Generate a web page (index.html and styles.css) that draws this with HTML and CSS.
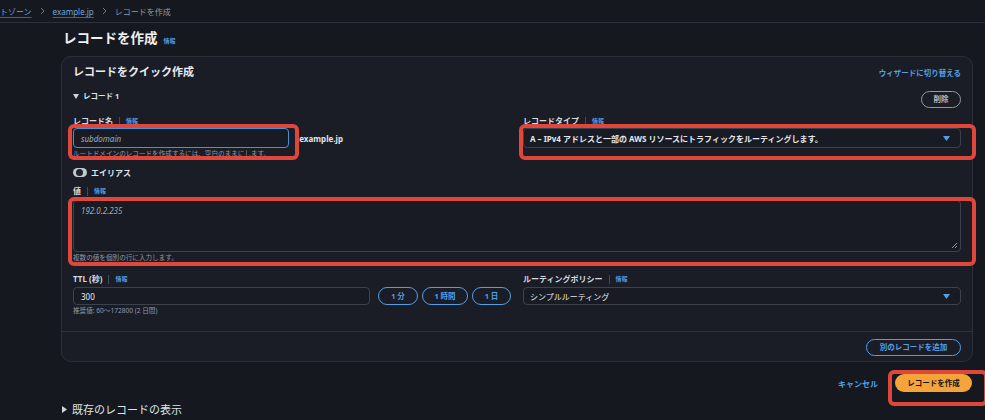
FILE: index.html
```html
<!DOCTYPE html>
<html lang="ja">
<head>
<meta charset="utf-8">
<title>レコードを作成</title>
<link rel="stylesheet" href="styles.css">
</head>
<body>
<nav class="crumbs">
  <a class="crumb-link">トゾーン</a>
  <svg class="chev" width="5" height="8" viewBox="0 0 5 8"><path d="M1 1l3 3-3 3" fill="none" stroke="#6b7685" stroke-width="1"/></svg>
  <a class="crumb-link">example.jp</a>
  <svg class="chev" width="5" height="8" viewBox="0 0 5 8"><path d="M1 1l3 3-3 3" fill="none" stroke="#6b7685" stroke-width="1"/></svg>
  <span class="crumb-current">レコードを作成</span>
</nav>

<main class="page">
  <header class="title-row">
    <h1 class="title">レコードを作成</h1>
    <a class="info info-title">情報</a>
  </header>

  <section class="card">
    <div class="card-head">
      <h2 class="card-title">レコードをクイック作成</h2>
      <a class="link">ウィザードに切り替える</a>
    </div>

    <div class="rec-head">
      <span class="rec-title"><svg class="tri-down" width="6" height="5" viewBox="0 0 6 5"><path d="M0 0h6L3 5z" fill="#d1d5db"/></svg>レコード 1</span>
      <button class="btn btn-gray">削除</button>
    </div>

    <div class="grid grid-top">
      <div class="field">
        <div class="label">レコード名<span class="sep"></span><a class="info">情報</a></div>
        <div class="name-row">
          <div class="input input-focus"><span class="ph">subdomain</span></div>
          <span class="suffix">.example.jp</span>
        </div>
        <div class="helper">ルートドメインのレコードを作成するには、空白のままにします。</div>
      </div>
      <div class="field">
        <div class="label">レコードタイプ<span class="sep"></span><a class="info">情報</a></div>
        <div class="select">
          <span class="select-text strong">A – IPv4 アドレスと一部の AWS リソースにトラフィックをルーティングします。</span>
          <svg class="caret" width="7" height="5" viewBox="0 0 7 5"><path d="M0 0h7L3.5 5z" fill="#539fe5"/></svg>
        </div>
      </div>
    </div>

    <div class="toggle-row">
      <span class="toggle"><span class="knob"></span></span>
      <span class="toggle-label">エイリアス</span>
    </div>

    <div class="field value-field">
      <div class="label">値<span class="sep"></span><a class="info">情報</a></div>
      <div class="textarea">
        <span class="ph">192.0.2.235</span>
        <svg class="grip" width="7" height="7" viewBox="0 0 7 7"><path d="M6 1L1 6M6 4L4 6" stroke="#8d99a8" stroke-width="1"/></svg>
      </div>
      <div class="helper">複数の値を個別の行に入力します。</div>
    </div>

    <div class="grid grid-ttl">
      <div class="field">
        <div class="label">TTL (秒)<span class="sep"></span><a class="info">情報</a></div>
        <div class="ttl-row">
          <div class="input input-ttl"><span class="val">300</span></div>
          <div class="ttl-btns">
            <button class="btn btn-blue btn-ttl1">1 分</button>
            <button class="btn btn-blue btn-ttl2">1 時間</button>
            <button class="btn btn-blue btn-ttl3">1 日</button>
          </div>
        </div>
        <div class="helper">推奨値: 60〜172800 (2 日間)</div>
      </div>
      <div class="field">
        <div class="label">ルーティングポリシー<span class="sep"></span><a class="info">情報</a></div>
        <div class="select select-short">
          <span class="select-text">シンプルルーティング</span>
          <svg class="caret" width="7" height="5" viewBox="0 0 7 5"><path d="M0 0h7L3.5 5z" fill="#539fe5"/></svg>
        </div>
      </div>
    </div>

    <div class="divider"></div>

    <div class="add-row">
      <button class="btn btn-blue btn-add">別のレコードを追加</button>
    </div>
  </section>

  <div class="actions">
    <a class="link cancel">キャンセル</a>
    <button class="btn btn-primary">レコードを作成</button>
  </div>

  <div class="expand">
    <svg class="tri-right" width="5" height="7" viewBox="0 0 5 7"><path d="M0 0l5 3.5L0 7z" fill="#d1d5db"/></svg>
    <span>既存のレコードの表示</span>
  </div>
</main>

<div class="mark mark-name"></div>
<div class="mark mark-type"></div>
<div class="mark mark-value"></div>
<div class="mark mark-create"></div>
</body>
</html>
```

FILE: styles.css
```css
* { box-sizing: border-box; }

html, body {
  margin: 0;
  padding: 0;
  background: #15181f;
}

body {
  position: relative;
  width: 985px;
  height: 420px;
  overflow: hidden;
  font-family: "Noto Sans", "Noto Sans CJK JP", sans-serif;
  color: #d1d5db;
}

a { text-decoration: none; cursor: pointer; }

button {
  font-family: inherit;
  cursor: pointer;
}

/* breadcrumb */
.crumbs {
  height: 23px;
  display: flex;
  align-items: center;
  gap: 6px;
  font-size: 8px;
  border-bottom: 1px solid #2b303a;
  padding-left: 0;
}

.crumb-link {
  color: #6ea6dc;
  text-decoration: underline;
  text-decoration-color: #3f6489;
  text-underline-offset: 2px;
}

.chev { margin: 0 2px; }

.crumb-current { color: #8d99a8; }

/* page */
.page {
  padding: 0 12px 0 61px;
}

.title-row {
  display: flex;
  align-items: center;
  gap: 6px;
  margin: 6px 0 9px 2px;
  height: 18px;
}

.title {
  margin: 0;
  font-size: 13.5px;
  line-height: 18px;
  font-weight: 700;
  color: #eef0f2;
}

.info {
  color: #539fe5;
  font-size: 6px;
  font-weight: 700;
}

.info-title { margin-top: 5px; }

/* card */
.card {
  background: #1a1d26;
  border: 1px solid #2a2f3a;
  border-radius: 10px;
  padding: 7px 11px 5px;
}

.card-head {
  display: flex;
  justify-content: space-between;
  align-items: center;
  height: 16px;
}

.card-title {
  margin: 0;
  font-size: 11px;
  line-height: 16px;
  font-weight: 700;
  color: #e9ebed;
}

.link {
  color: #539fe5;
  font-size: 7.5px;
  font-weight: 700;
}

.rec-head {
  display: flex;
  justify-content: space-between;
  align-items: flex-start;
  margin-top: 10px;
  height: 18px;
}

.rec-title {
  display: flex;
  align-items: center;
  gap: 4px;
  font-size: 7.5px;
  line-height: 12px;
  font-weight: 700;
  color: #dfe3e8;
}

.btn {
  height: 17px;
  border-radius: 9px;
  background: transparent;
  font-size: 7.5px;
  font-weight: 700;
  padding: 0;
  line-height: 15px;
}

.btn-gray {
  margin-top: 1px;
  width: 40px;
  border: 1px solid #8d99a8;
  color: #b4bcc7;
}

.btn-blue {
  border: 1px solid #539fe5;
  color: #539fe5;
}

/* grid */
.grid {
  display: grid;
  grid-template-columns: 1fr 1fr;
  column-gap: 12px;
}

.grid-top { margin-top: 7px; }
.grid-ttl { margin-top: 10px; }

.field { display: flex; flex-direction: column; }

.label {
  display: flex;
  align-items: center;
  font-size: 8px;
  line-height: 12px;
  font-weight: 700;
  color: #d5dae0;
  height: 12px;
}

.sep {
  display: inline-block;
  width: 1px;
  height: 9px;
  background: #414b58;
  margin: 0 6px;
}

.name-row {
  display: flex;
  align-items: center;
  margin-top: 1px;
  gap: 9px;
}

.input {
  height: 20px;
  border: 1px solid #3b424e;
  border-radius: 4px;
  background: #181b23;
  display: flex;
  align-items: center;
  padding-left: 7px;
  font-size: 8px;
}

.input-focus {
  width: 216px;
  border: 1px solid #4b8fd4;
}

.ph {
  font-style: italic;
  color: #a3adba;
  font-size: 8px;
}

.val { color: #e9ebed; }

.suffix {
  font-size: 8px;
  font-weight: 700;
  color: #e1e5ea;
  margin-left: -1px;
}

.helper {
  font-size: 6.6px;
  line-height: 10px;
  height: 10px;
  margin-top: 1px;
  color: #8d99a8;
  white-space: nowrap;
}

.select {
  margin-top: 1px;
  height: 20px;
  border: 1px solid #3b424e;
  border-radius: 4px;
  background: #181b23;
  display: flex;
  align-items: center;
  justify-content: space-between;
  padding: 0 10px 0 6px;
}

.select-short {
  margin-top: 2px;
  height: 18px;
}

.select-text {
  font-size: 8px;
  color: #e4e7eb;
  white-space: nowrap;
}

.select-text.strong { font-weight: 700; }

/* toggle */
.toggle-row {
  display: flex;
  align-items: center;
  gap: 4px;
  margin-top: 7px;
  height: 12px;
}

.toggle {
  width: 14px;
  height: 9px;
  border-radius: 5px;
  background: #c2c8d0;
  position: relative;
  display: inline-block;
}

.knob {
  position: absolute;
  left: 3px;
  top: 1px;
  width: 7px;
  height: 7px;
  border-radius: 50%;
  background: #1f232c;
}

.toggle-label {
  font-size: 8px;
  font-weight: 700;
  color: #dfe3e8;
}

/* value */
.value-field { margin-top: 7px; }

.textarea {
  position: relative;
  margin-top: 3px;
  height: 52px;
  border: 1px solid #3b424e;
  border-radius: 4px;
  background: #181b23;
  padding: 4px 7px;
  font-size: 8px;
  line-height: 12px;
}

.grip {
  position: absolute;
  right: 2px;
  bottom: 2px;
}

/* ttl */
.ttl-row {
  display: flex;
  gap: 8px;
  margin-top: 2px;
}

.input-ttl {
  flex: 1;
  height: 18px;
}

.ttl-btns {
  display: flex;
  gap: 4px;
}

.btn-ttl1 { width: 40px; height: 18px; }
.btn-ttl2 { width: 46px; height: 18px; }
.btn-ttl3 { width: 39px; height: 18px; }

.divider {
  height: 1px;
  background: #2c313c;
  margin: 15px -11px 0;
}

.add-row {
  display: flex;
  justify-content: flex-end;
  margin-top: 7px;
}

.btn-add {
  width: 95px;
}

/* footer */
.actions {
  display: flex;
  justify-content: flex-end;
  align-items: center;
  gap: 17px;
  margin-top: 12px;
  padding-right: 1px;
  height: 18px;
}

.cancel { font-size: 8px; }

.btn-primary {
  width: 77px;
  height: 18px;
  border: none;
  background: #f5a43a;
  color: #10151c;
  line-height: 18px;
}

.expand {
  display: flex;
  align-items: center;
  gap: 5px;
  margin-top: 10px;
  margin-left: 1px;
  height: 14px;
  font-size: 11px;
  color: #dfe3e8;
}

/* annotation overlays */
.mark {
  position: absolute;
  border: 4px solid #e0473a;
  border-radius: 6px;
  pointer-events: none;
}

.mark-name { left: 68px; top: 124px; width: 231px; height: 36px; }
.mark-type { left: 519px; top: 124px; width: 457px; height: 36px; }
.mark-value { left: 68px; top: 197px; width: 908px; height: 69px; }
.mark-create { left: 888px; top: 370px; width: 100px; height: 36px; }
```
